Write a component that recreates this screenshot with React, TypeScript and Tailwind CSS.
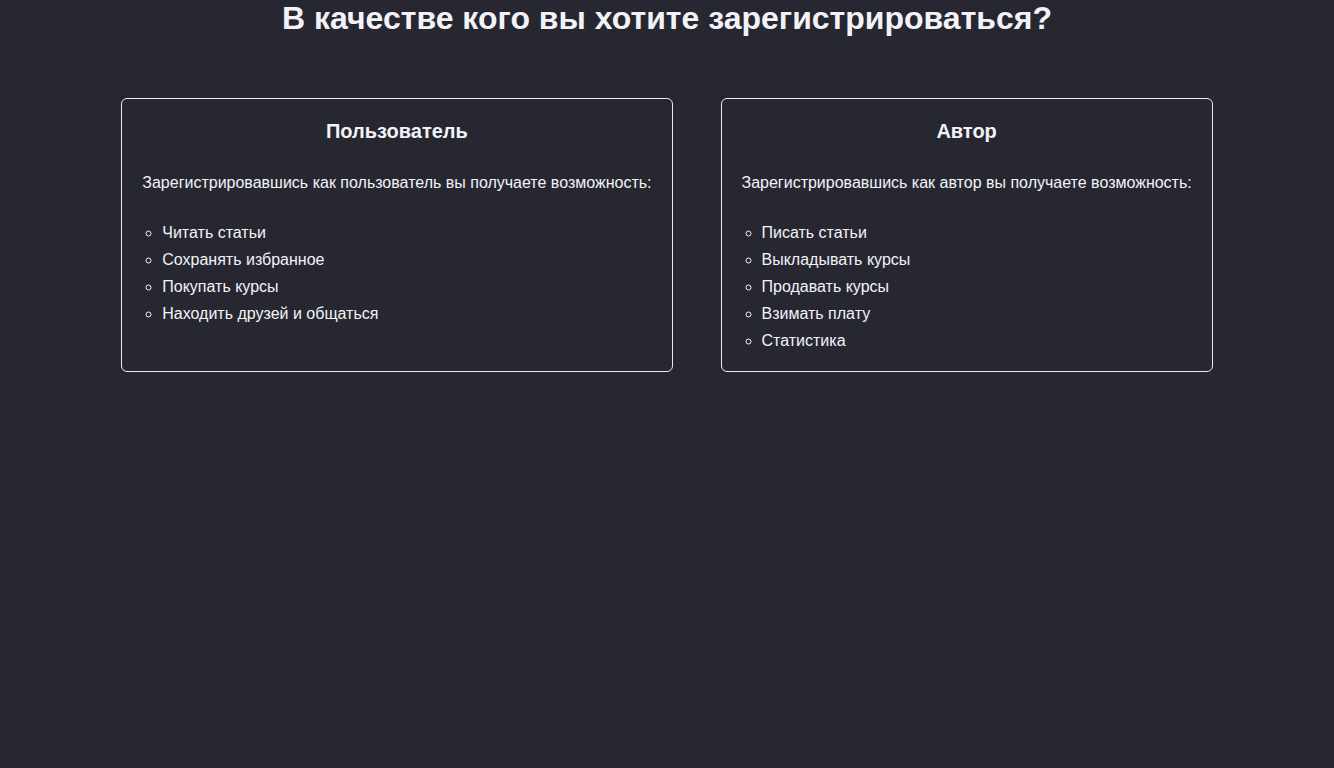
import React from "react";

const cards = [
  {
    title: "Пользователь",
    text: "Зарегистрировавшись как пользователь вы получаете возможность:",
    items: ["Читать статьи", "Сохранять избранное", "Покупать курсы", "Находить друзей и общаться"],
  },
  {
    title: "Автор",
    text: "Зарегистрировавшись как автор вы получаете возможность:",
    items: ["Писать статьи", "Выкладывать курсы", "Продавать курсы", "Взимать плату", "Статистика"],
  },
];

export default function App() {
  return (
    <div
      className="min-h-[768px] w-full bg-[#272732] text-[#f3f3f7]"
      style={{ fontFamily: '"Liberation Sans", Arial, sans-serif' }}
    >
      <h1 className="text-center text-[32px] font-bold leading-[37px]">
        В качестве кого вы хотите зарегистрироваться?
      </h1>
      <div className="mt-[61px] flex items-stretch justify-center gap-12">
        {cards.map((c) => (
          <div
            key={c.title}
            className="rounded-md border border-[#e8e8ef] px-5 pt-[21px] pb-[17px]"
          >
            <h2 className="text-center text-[20px] font-bold leading-[23px]">{c.title}</h2>
            <p className="mt-[31px] text-[16px] leading-[18px]">{c.text}</p>
            <ul className="mt-[27px] list-[circle] pl-5 text-[16px] leading-[27px]">
              {c.items.map((i) => (
                <li key={i}>{i}</li>
              ))}
            </ul>
          </div>
        ))}
      </div>
    </div>
  );
}
